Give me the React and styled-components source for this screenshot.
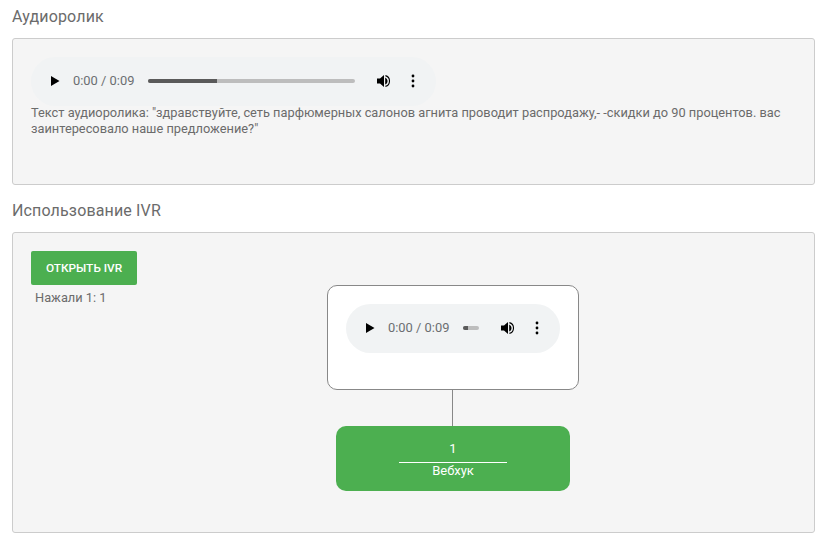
import React from "react";
import styled, { createGlobalStyle } from "styled-components";

const GlobalStyle = createGlobalStyle`
  html, body {
    margin: 0;
    padding: 0;
    background: #fff;
  }
  body {
    font-family: Roboto, "Liberation Sans", sans-serif;
    color: #6b6b6b;
  }
`;

const Page = styled.div`
  width: 824px;
  height: 540px;
  padding: 7px 9px 0 12px;
  box-sizing: border-box;
  overflow: hidden;
`;

const Heading = styled.h2`
  margin: 0;
  height: 22px;
  font-size: 16px;
  font-weight: 400;
  line-height: 19px;
  letter-spacing: 0.15px;
  color: #6b6b6b;
`;

const Panel = styled.section`
  box-sizing: border-box;
  height: ${(p) => p.$height}px;
  margin-top: 9px;
  margin-bottom: ${(p) => p.$gap || 0}px;
  padding: 18px;
  background: #f5f5f5;
  border: 1px solid #ccc;
  border-radius: 3px;
`;

const Player = styled.div`
  box-sizing: border-box;
  display: flex;
  align-items: center;
  width: ${(p) => p.$width}px;
  height: 49px;
  padding-bottom: 1px;
  padding-left: 19px;
  background: #f1f3f4;
  border-radius: 25px;
  flex-shrink: 0;
`;

const PlayIcon = styled.svg`
  width: 10px;
  height: 12px;
  flex-shrink: 0;
`;

const Time = styled.span`
  margin-left: 13px;
  width: 61px;
  font-size: 12.9px;
  line-height: 16px;
  white-space: nowrap;
  color: #6b6e71;
  flex-shrink: 0;
`;

const Track = styled.div`
  width: ${(p) => p.$width}px;
  height: 4px;
  margin-left: 14px;
  background: #bdbdbd;
  border-radius: 2px;
  flex-shrink: 0;
  overflow: hidden;
`;

const Played = styled.div`
  height: 100%;
  background: #5a5a5a;
`;

const VolumeIcon = styled.svg`
  width: 16px;
  height: 16px;
  margin-left: 21px;
  flex-shrink: 0;
`;

const MenuIcon = styled.svg`
  width: 4px;
  height: 14px;
  margin-left: 19px;
  flex-shrink: 0;
`;

const AudioPlayer = ({ width, trackWidth, played }) => (
  <Player $width={width}>
    <PlayIcon viewBox="0 0 10 12">
      <path d="M1 1L9.5 6L1 11Z" fill="#000" />
    </PlayIcon>
    <Time>0:00 / 0:09</Time>
    <Track $width={trackWidth}>
      <Played style={{ width: played }} />
    </Track>
    <VolumeIcon viewBox="0 0 16 16">
      <path d="M1 5.6v4.8h3l4 3.6V2L4 5.6H1z" fill="#000" />
      <path d="M9.2 4.4c1.4.7 2.3 2 2.3 3.6s-.9 2.9-2.3 3.6z" fill="#000" />
      <path d="M9.4 2.6c2.4.6 4.1 2.8 4.1 5.4s-1.7 4.8-4.1 5.4" fill="none" stroke="#000" strokeWidth="1.1" />
    </VolumeIcon>
    <MenuIcon viewBox="0 0 4 14">
      <circle cx="2" cy="2" r="1.4" fill="#000" />
      <circle cx="2" cy="7" r="1.4" fill="#000" />
      <circle cx="2" cy="12" r="1.4" fill="#000" />
    </MenuIcon>
  </Player>
);

const Transcript = styled.p`
  margin: -1px 0 0;
  font-size: 12.8px;
  line-height: 16px;
  color: #6b6b6b;
`;

const IvrLayout = styled.div`
  display: flex;
`;

const Controls = styled.div`
  width: 296px;
  flex-shrink: 0;
`;

const OpenButton = styled.button`
  display: block;
  width: 106px;
  height: 34px;
  padding: 0;
  border: none;
  border-radius: 2px;
  background: #4caf50;
  color: #fff;
  font-family: inherit;
  font-size: 11.8px;
  font-weight: 500;
  text-transform: uppercase;
`;

const PressCount = styled.div`
  margin: 5px 0 0 4px;
  font-size: 12.8px;
  line-height: 16px;
`;

const Tree = styled.div`
  width: 252px;
  margin-top: 34px;
  display: flex;
  flex-direction: column;
  align-items: center;
`;

const AudioNode = styled.div`
  box-sizing: border-box;
  width: 252px;
  height: 105px;
  padding: 18px;
  background: #fff;
  border: 1px solid #888;
  border-radius: 10px;
`;

const Connector = styled.div`
  width: 1px;
  height: 36px;
  margin-right: 1px;
  background: #888;
`;

const WebhookNode = styled.div`
  box-sizing: border-box;
  width: 234px;
  height: 65px;
  padding-top: 15px;
  background: #4caf50;
  border-radius: 10px;
  color: #fff;
  font-size: 13px;
  line-height: 16px;
  text-align: center;
`;

const NodeKey = styled.div`
  width: 108px;
  margin: 0 auto;
  padding-bottom: 5px;
  border-bottom: 1px solid #fff;
`;

const App = () => (
  <Page>
    <GlobalStyle />
    <Heading>Аудиоролик</Heading>
    <Panel $height={147} $gap={16}>
      <AudioPlayer width={405} trackWidth={207} played="33.5%" />
      <Transcript>
        Текст аудиоролика: "здравствуйте, сеть парфюмерных салонов агнита проводит распродажу,- -скидки до 90 процентов. вас заинтересовало наше предложение?"
      </Transcript>
    </Panel>
    <Heading>Использование IVR</Heading>
    <Panel $height={301}>
      <IvrLayout>
        <Controls>
          <OpenButton>Открыть IVR</OpenButton>
          <PressCount>Нажали 1: 1</PressCount>
        </Controls>
        <Tree>
          <AudioNode>
            <AudioPlayer width={214} trackWidth={16} played="30%" />
          </AudioNode>
          <Connector />
          <WebhookNode>
            <NodeKey>1</NodeKey>
            Вебхук
          </WebhookNode>
        </Tree>
      </IvrLayout>
    </Panel>
  </Page>
);

export default App;
